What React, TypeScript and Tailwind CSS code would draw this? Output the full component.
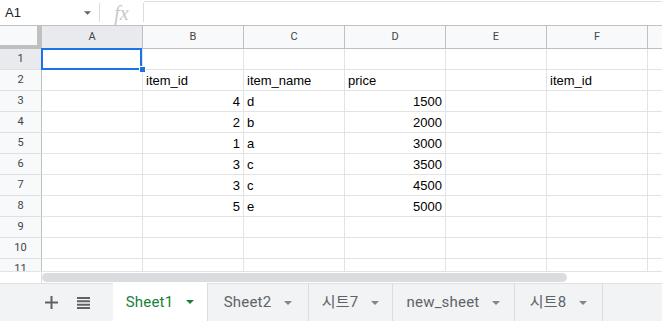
import React from 'react';

const COLS = ['A', 'B', 'C', 'D', 'E', 'F', 'G'];

type Cell = { v: string; right?: boolean };

const data: Record<number, Record<string, Cell>> = {
  2: { B: { v: 'item_id' }, C: { v: 'item_name' }, D: { v: 'price' }, F: { v: 'item_id' } },
  3: { B: { v: '4', right: true }, C: { v: 'd' }, D: { v: '1500', right: true } },
  4: { B: { v: '2', right: true }, C: { v: 'b' }, D: { v: '2000', right: true } },
  5: { B: { v: '1', right: true }, C: { v: 'a' }, D: { v: '3000', right: true } },
  6: { B: { v: '3', right: true }, C: { v: 'c' }, D: { v: '3500', right: true } },
  7: { B: { v: '3', right: true }, C: { v: 'c' }, D: { v: '4500', right: true } },
  8: { B: { v: '5', right: true }, C: { v: 'e' }, D: { v: '5000', right: true } },
};

const rows = [1, 2, 3, 4, 5, 6, 7, 8, 9, 10, 11];

const tabs = [
  { name: 'Sheet1', w: 'w-[95px]', active: true },
  { name: 'Sheet2', w: 'w-[101px]' },
  { name: '시트7', w: 'w-[84px]' },
  { name: 'new_sheet', w: 'w-[122px]' },
  { name: '시트8', w: 'w-[88px]' },
];

const Caret = ({ className }: { className: string }) => (
  <svg width="8" height="4" viewBox="0 0 8 4" className={className}>
    <path d="M0 0h8L4 4z" fill="currentColor" />
  </svg>
);

export default function App() {
  return (
    <div className="w-[662px] h-[321px] overflow-hidden bg-white font-['Liberation_Sans',Arial,sans-serif] text-[13px] text-black flex flex-col">
      {/* formula bar */}
      <div className="h-[26px] flex items-center border-b border-[#c0c0c0] shrink-0">
        <div className="w-[99px] h-full flex items-center justify-between pl-[5px] pr-[8px]">
          <span className="text-[13px] text-[#202124]">A1</span>
          <Caret className="text-[#5f6368] w-[7px]" />
        </div>
        <div className="w-px h-[19px] bg-[#dadce0]" />
        <div className="w-[43px] h-full flex items-center justify-center">
          <span className="font-['Liberation_Serif',serif] italic text-[20px] text-[#c8c8c8] leading-none">fx</span>
        </div>
        <div className="w-px h-[19px] bg-[#dadce0]" />
        <div className="flex-1 h-full border-t border-[#e0e0e0] mt-[1px]" />
      </div>

      {/* grid */}
      <div className="h-[245px] overflow-hidden shrink-0">
        <div className="grid grid-cols-[42px_repeat(7,101px)] grid-rows-[23px_repeat(11,21px)]">
          <div className="bg-[#f8f9fa] border-r-[5px] border-b-4 border-[#c0c0c0]" />
          {COLS.map((c) => (
            <div
              key={c}
              className={`flex items-center justify-center border-r border-b border-[#c0c0c0] font-['Roboto',sans-serif] text-[11px] text-[#444] ${
                c === 'A' ? 'bg-[#e8eaed]' : 'bg-[#f8f9fa]'
              }`}
            >
              {c}
            </div>
          ))}
          {rows.map((r) => (
            <React.Fragment key={r}>
              <div
                className={`flex items-center justify-center border-r border-b border-r-[#c0c0c0] border-b-[#e0e0e0] font-['Roboto',sans-serif] text-[11px] text-[#444] ${
                  r === 1 ? 'bg-[#e8eaed]' : 'bg-[#f8f9fa]'
                }`}
              >
                {r}
              </div>
              {COLS.map((c) => {
                const cell = data[r]?.[c];
                const selected = r === 1 && c === 'A';
                return (
                  <div
                    key={c}
                    className={`relative border-r border-b border-[#e2e3e3] px-[3px] leading-[21px] whitespace-nowrap ${
                      cell?.right ? 'text-right' : 'text-left'
                    }`}
                  >
                    {cell?.v}
                    {selected && (
                      <>
                        <div className="absolute -left-px -top-px w-[101px] h-[22px] border-2 border-[#1a73e8]" />
                        <div className="absolute right-[-4px] bottom-[-4px] w-[7px] h-[7px] bg-[#1a73e8] border border-white z-10" />
                      </>
                    )}
                  </div>
                );
              })}
            </React.Fragment>
          ))}
        </div>
      </div>

      {/* horizontal scrollbar */}
      <div className="h-[12px] flex border-t border-[#e2e3e3] shrink-0">
        <div className="w-[42px] border-r border-[#e0e0e0]" />
        <div className="flex-1 flex items-center">
          <div className="w-[525px] h-[9px] rounded-full bg-[#dadce0]" />
        </div>
      </div>

      {/* sheet tabs */}
      <div className="flex-1 flex bg-[#f1f3f4] border-t border-[#e0e0e0] font-['Roboto',sans-serif] text-[15px]">
        <div className="w-[113px] flex items-center pl-[45px] gap-[19px] text-[#5f6368]">
          <svg width="13" height="13" viewBox="0 0 13 13">
            <path d="M5.5 0h2v5.5H13v2H7.5V13h-2V7.5H0v-2h5.5z" fill="currentColor" />
          </svg>
          <svg width="13" height="12" viewBox="0 0 13 12">
            <path d="M0 0h13v2H0zM0 3.3h13v2H0zM0 6.7h13v2H0zM0 10h13v2H0z" fill="currentColor" />
          </svg>
        </div>
        {tabs.map((t) => (
          <div
            key={t.name}
            className={`${t.w} flex items-center justify-center gap-[13px] tracking-[0.2px] border-r border-[#dadce0] ${
              t.active ? 'bg-white text-[#188038] -mt-px' : 'text-[#5f6368]'
            }`}
          >
            <span className="font-['Roboto','Noto_Sans_CJK_KR',sans-serif]">{t.name}</span>
            <Caret className={t.active ? 'text-[#188038]' : 'text-[#80868b]'} />
          </div>
        ))}
      </div>
    </div>
  );
}
